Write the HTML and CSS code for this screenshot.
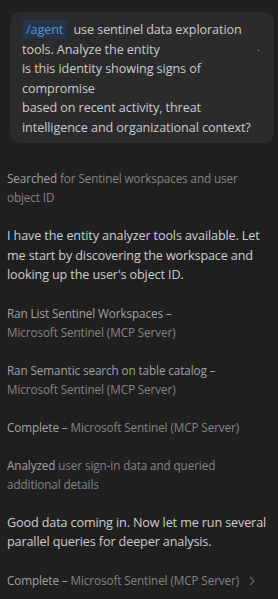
FILE: index.html
```html
<!DOCTYPE html>
<html>
<head>
<meta charset="utf-8">
<link rel="stylesheet" href="styles.css">
</head>
<body>
<div class="card">
  <p class="prompt"><span class="cmd">/agent</span> use sentinel data exploration tools. Analyze the entity<br>is this identity showing signs of compromise<br>based on recent activity, threat intelligence and organizational context?</p>
  <span class="dot"></span>
</div>
<div class="log">
  <p class="step"><span class="verb">Searched</span> for Sentinel workspaces and user object ID</p>
  <p class="msg">I have the entity analyzer tools available. Let me start by discovering the workspace and looking up the user's object ID.</p>
  <p class="step"><span class="verb">Ran List Sentinel Workspaces –</span><br>Microsoft Sentinel (MCP Server)</p>
  <p class="step"><span class="verb">Ran Semantic search on table catalog –</span><br>Microsoft Sentinel (MCP Server)</p>
  <p class="step"><span class="verb">Complete –</span> Microsoft Sentinel (MCP Server)</p>
  <p class="step"><span class="verb">Analyzed</span> user sign-in data and queried additional details</p>
  <p class="msg">Good data coming in. Now let me run several parallel queries for deeper analysis.</p>
  <p class="step last"><span class="verb">Complete –</span> Microsoft Sentinel (MCP Server)<svg class="chev" width="6" height="10" viewBox="0 0 6 10"><path d="M1 1 L5 5 L1 9" fill="none" stroke="#6a6a6a" stroke-width="1.1"/></svg></p>
</div>
</body>
</html>
```
FILE: styles.css
```css
* { box-sizing: border-box; }
html, body { margin: 0; padding: 0; }
body {
  background: #1f1f1f;
  font-family: "Open Sans", "Noto Sans", sans-serif;
  width: 278px;
  height: 599px;
  overflow: hidden;
}
p { margin: 0; }
.card {
  position: relative;
  margin: 12px 4px 0 10px;
  padding: 8px 12px 6px 12px;
  background: #2b2b2c;
  border-radius: 10px;
}
.prompt {
  color: #cccccc;
  font-size: 12.6px;
  line-height: 19.5px;
  letter-spacing: -0.08px;
}
.cmd {
  color: #4f97dc;
  background: #25344b;
  border-radius: 3px;
  padding: 1px 4px;
  margin-right: 3px;
}
.dot {
  position: absolute;
  left: 248px;
  top: 38px;
  width: 1px;
  height: 1px;
  background: #bbbbbb;
}
.log {
  display: flex;
  flex-direction: column;
  gap: 19px;
  padding: 26px 9px 0 7px;
}
.step {
  color: #858585;
  font-size: 11.7px;
  line-height: 19px;
  letter-spacing: -0.09px;
}
.verb { color: #a3a3a3; }
.msg {
  color: #cfcfcf;
  font-size: 12.6px;
  line-height: 19.5px;
  letter-spacing: -0.12px;
}
.chev { margin-left: 10px; vertical-align: -1px; }
```
